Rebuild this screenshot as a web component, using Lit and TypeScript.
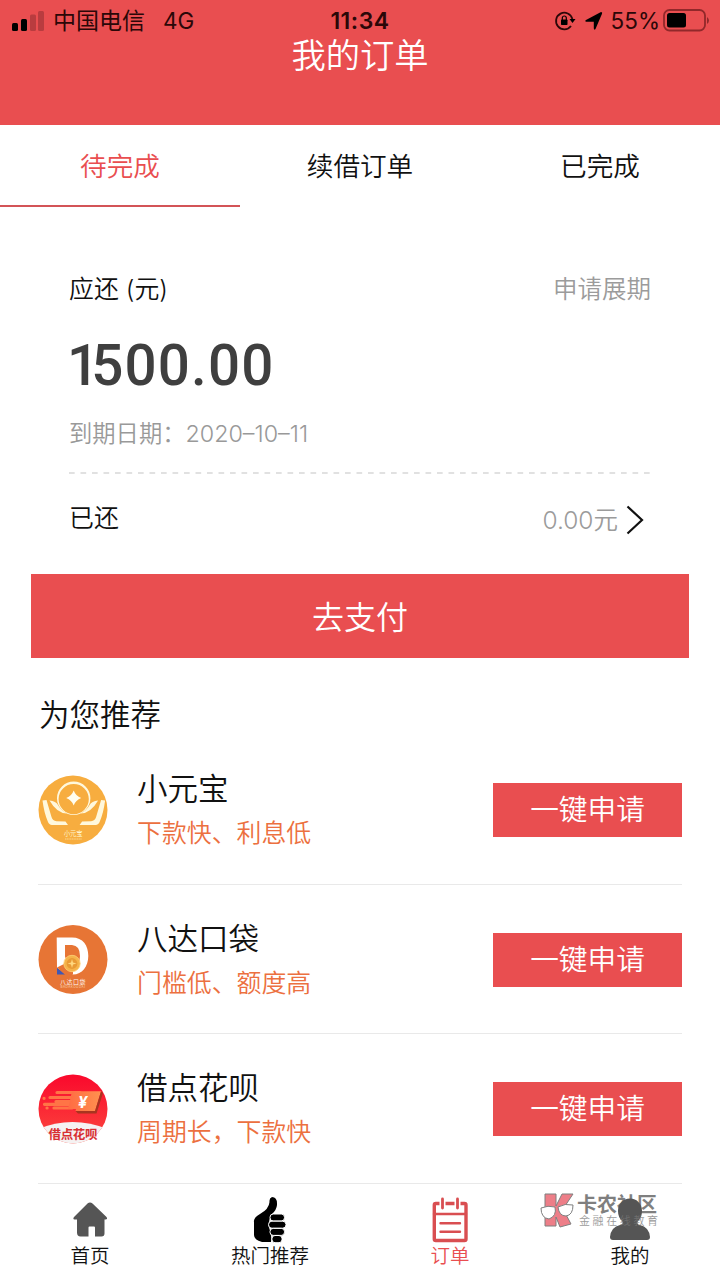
import { LitElement, html, css, svg } from "lit";
import { customElement } from "lit/decorators.js";

const coin = html`<svg class="logo" viewBox="0 5 90 90">
  <circle cx="43" cy="50" r="34.500" fill="#f7ad3f" />
  <path fill-rule="evenodd" fill="#fff8dc" d="M43.700 21.500a16.700 16.700 0 1 1 0 33.400a16.700 16.700 0 1 1 0-33.400zM43.700 24a15 15 0 1 0 0 30.200a15 15 0 1 0 0-30.200z" />
  <path d="M43.700 30.500q2 5.500 7.500 7.500q-5.500 2-7.500 7.500q-2-5.500-7.500-7.500q5.500-2 7.500-7.500z" fill="#fffdf0" />
  <g fill="#fff8dc">
    <path d="M12.500 40.500l4-.5 5 17q1.200 4 5 4.200l9 .4 2.500 3.400H22q-3-.2-4.200-3.500q-3.800-9-5.300-21zM19.500 40.500Q26 41 28 45Q30.500 50 37 53.500Q27 53.500 19.500 40.500z" />
    <path transform="translate(87.600 0) scale(-1 1)" d="M12.500 40.500l4-.5 5 17q1.200 4 5 4.200l9 .4 2.500 3.400H22q-3-.2-4.200-3.500q-3.800-9-5.300-21zM19.500 40.500Q26 41 28 45Q30.500 50 37 53.500Q27 53.500 19.500 40.500z" />
  </g>
  <text x="34" y="76" font-size="6.300" fill="#fff5cf" textLength="18.500">小元宝</text>
  <path d="M35 79h17" stroke="#fde0a0" stroke-width=".8" stroke-dasharray="1.300 .4" />
</svg>`;

const pocket = html`<svg class="logo" viewBox="0 -.500 90 90">
  <circle cx="43" cy="44" r="34.500" fill="#e77535" />
  <path fill-rule="evenodd" fill="#fff" d="M26.700 22H42C53 22 58.300 30 58.300 40.500S52 59 43 59L27 53zM35 29.500V41l4 12H42Q50 51 50 40.500T42 29.500z" />
  <path d="M27 52l8 7h-8z" fill="#3f58b5" />
  <path d="M27 52l8 7h8v-3l-8-8z" fill="#e77535" />
  <circle cx="42" cy="48" r="8.200" fill="#f5b34b" stroke="#ffd077" stroke-width=".8" />
  <circle cx="42" cy="48" r="5.400" fill="#e99a35" />
  <path d="M42 43.500l1 3.500 3.500 1-3.500 1-1 3.500-1-3.500-3.500-1 3.500-1z" fill="#ffd77f" />
  <text x="30" y="68" font-size="6" fill="#fff" textLength="25.500">八达口袋</text>
  <text x="30.500" y="72.500" font-size="3.200" fill="#ffe1cc" textLength="24.500">BADAKOUDAI</text>
</svg>`;

const flower = html`<svg class="logo" viewBox="0 -1 90 90">
  <defs>
    <clipPath id="c"><circle cx="43" cy="44" r="34.500" /></clipPath>
    <linearGradient id="g" x2="0" y2="1"><stop stop-color="#fa082c" /><stop offset="1" stop-color="#fb493e" /></linearGradient>
    <linearGradient id="o"><stop stop-color="#ff6c43" /><stop offset="1" stop-color="#ff914f" /></linearGradient>
  </defs>
  <g clip-path="url(#c)">
    <rect x="8" y="9" width="70" height="70" fill="url(#g)" />
    <path d="M6 65Q42 49 80 65V80H6z" fill="#f5f2f2" />
    <g stroke="#ff7446" stroke-width="3.200" stroke-linecap="round" fill="none"><path d="M27 27.500H50M14 33.300h.1M20 32.500H48M26 36.500H48M14.500 39.300H48M17 43h.1M24 43H42" /></g>
    <path d="M42 26.200H71L65 46H45.500L46 44H38z" fill="url(#o)" />
    <path d="M65 46l6-19.500 2 1.500-6.500 20.500H48L45.500 46z" fill="#a8351f" />
    <text x="48" y="42.500" font-size="16" font-weight="700" font-style="italic" fill="#fff">¥</text>
  </g>
  <text x="18.500" y="73.500" font-size="12.500" font-weight="700" fill="#d82f32" textLength="49">借点花呗</text>
</svg>`;

const icons = {
  home: svg`<path d="M31 23Q33.500 21 36 23L50 36.500Q51.500 38.500 49 39H48V53Q48 56 45 56H38.500V47Q38.500 46 37.500 46H33Q32 46 32 47V56H24Q20.500 56 20.500 52V39H18Q16 38.500 17.500 36.500z" transform="translate(.5 .5)" fill="#555" />`,
  thumb: svg`<g transform="translate(1 0)"><path d="M33 17Q38.500 17 38 25Q37.500 30 33 34Q28 42 30.500 49Q33 55 32 62H23Q15 60 15 55V42Q14 38 21 34Q30 29 30.500 22Q30 18 33 17z" fill="#000" />
    <g fill="#000" stroke="#fff" stroke-width="1"><rect x="31" y="34" width="14.500" height="7" rx="3.200" /><rect x="29.500" y="41.200" width="17.500" height="7" rx="3.400" /><rect x="31" y="48.400" width="14.500" height="7" rx="3.200" /><rect x="33" y="55.500" width="10" height="7.200" rx="3" /></g></g>`,
  order: svg`<g fill="none" stroke="#d94e51" stroke-width="2.800" stroke-linecap="round"><rect x="20.300" y="23.500" width="31.700" height="37" rx="1.500" stroke-width="3.400" /><path d="M20 34H52M26.500 43.200H46M26.500 51.800H46" stroke-width="2.400" /><path d="M28.500 18.500V29M43.500 18.500V29" stroke="#fff" stroke-width="6" stroke-linecap="butt" /><path d="M28.500 19V28M43.500 19V28" /></g>`,
  me: svg`<path d="M36 18.500C43 18.500 48 24 48 31Q48 37 44 41Q42 44 46 45Q55 47 56 57Q56 60 53 60H19Q16 60 16 57Q17 47 26 45Q30 44 28 41Q24 37 24 31C24 24 29 18.500 36 18.500z" fill="#555" />`,
};

const offers = [
  { logo: coin, name: "小元宝", note: "下款快、利息低" },
  { logo: pocket, name: "八达口袋", note: "门槛低、额度高" },
  { logo: flower, name: "借点花呗", note: "周期长，下款快" },
];

@customElement("app-root")
export class AppRoot extends LitElement {
  static styles = css`
    :host { display: block; width: 720px; height: 1280px; overflow: hidden; position: relative; background: #fff; color: #111; font-family: Inter, "Noto Sans CJK SC", sans-serif; font-weight: 350; }
    * { box-sizing: border-box; }
    svg { display: block; flex: none; }
    .header { height: 125px; background: #e94e50; }
    .status { height: 38px; display: grid; grid-template-columns: 1fr auto 1fr; align-items: center; padding: 2px 12px 0 12px; color: #2b0708; font-size: 22px; line-height: 36px; font-weight: 400; }
    .side { display: flex; align-items: center; }
    .right { justify-content: flex-end; margin-right: -2px; }
    .carrier { margin-left: 8px; padding-top: 1px; font-size: 23px; }
    .net { margin-left: 18px; font-size: 22.500px; }
    .clock { font-weight: 600; font-size: 23px; letter-spacing: .5px; }
    .pct { margin: 0 3px 0 8px; font-size: 22.500px; }
    .title { height: 34px; line-height: 36px; text-align: center; color: #fff; font-size: 34.300px; }
    .tabs { height: 82px; display: grid; grid-template-columns: repeat(3, 1fr); text-align: center; font-size: 26.600px; line-height: 82px; }
    .tab { height: 82px; border-bottom: 2px solid transparent; }
    .active { color: #e94e50; border-color: #d35457; }
    .bill { padding: 60px 69px 0; height: 367px; display: flex; flex-direction: column; }
    .row { display: flex; justify-content: space-between; align-items: center; height: 44px; line-height: 44px; font-size: 24.900px; }
    .muted { color: #9b9b9b; font-size: 24.500px; }
    .amount { height: 72px; margin-top: 17px; line-height: 76px; font-family: Roboto, sans-serif; font-size: 56.500px; font-weight: 500; color: #3f3f3f; letter-spacing: 1.200px; margin-left: -2px; }
    .lead { letter-spacing: -8px; }
    .due { margin-top: 13px; height: 40px; line-height: 42px; font-size: 23.300px; color: #999; }
    .dash { margin-top: 19px; flex: none; }
    .paid { margin-top: 24px; }
    .paid .label { position: relative; top: -2px; }
    .link { display: flex; align-items: center; gap: 8px; margin-right: 7px; }
    .pay { margin: 0 31px; height: 84px; line-height: 88px; text-align: center; background: #e94e50; color: #fff; font-size: 32px; }
    .heading { height: 77px; padding: 37px 0 0 39px; line-height: 40px; font-size: 30.500px; }
    .offer { height: 149.600px; margin: 0 38px; padding-top: 1.500px; display: flex; align-items: center; border-bottom: 1px solid #e9e9e9; }
    .logo { width: 90px; height: 90px; margin: 0 17px 0 -8px; }
    .info { flex: 1; padding-top: 2px; }
    .name { font-size: 30.500px; line-height: 44px; }
    .note { font-size: 24.900px; line-height: 44px; color: #ec7040; }
    .apply { width: 189px; height: 54px; line-height: 54px; background: #e94e50; color: #fff; text-align: center; font-size: 28.700px; }
    .nav { height: 96px; display: grid; grid-template-columns: repeat(4, 1fr); }
    .item { display: flex; flex-direction: column; align-items: center; font-size: 19.500px; line-height: 24px; }
    .item svg { margin: -4px 0 -4px; }
    .on { color: #e94e50; }
    .mark { position: absolute; left: 538px; top: 1188px; opacity: .75; }
  `;

  render() {
    return html`
      <header class="header">
        <div class="status">
          <div class="side">
            <svg width="33" height="22"><rect x="0" y="13" width="6" height="8" rx="1.500" /><rect x="9" y="9" width="6" height="12" rx="1.500" /><g fill="#b93c3f"><rect x="18" y="4.500" width="6" height="16.500" rx="1.500" /><rect x="26" y="1" width="6" height="20" rx="1.500" /></g></svg>
            <span class="carrier">中国电信</span><span class="net">4G</span>
          </div>
          <div class="clock">11:34</div>
          <div class="side right">
            <svg width="22" height="22" viewBox="0 0 22 22"><path d="M18.400 9A8.300 8.300 0 1 0 17 16" fill="none" stroke="#2b0708" stroke-width="1.800" /><path d="M15.500 9h6l-3 4z" /><rect x="7" y="9.500" width="6.500" height="5.500" rx=".7" /><path d="M8.300 10V8a2 2 0 0 1 4 0v2" fill="none" stroke="#000" stroke-width="1.200" /></svg>
            <svg width="27" height="20" viewBox="-8 0 27 20"><path d="M17 1Q18.800 1 18 2.700L11.500 18Q10.300 19.500 9.800 17.500V10.800H2Q.2 10 2 9z" /></svg>
            <span class="pct">55%</span>
            <svg width="47" height="23" viewBox="0 0 47 23"><rect x="1" y="1" width="41" height="20.500" rx="5.500" fill="none" stroke="#91282a" stroke-width="1.800" /><rect x="4" y="4" width="19" height="14.500" rx="2.500" /><path d="M44 8v7q2-1.500 2-3.500T44 8z" fill="#91282a" /></svg>
          </div>
        </div>
        <div class="title">我的订单</div>
      </header>
      <nav class="tabs"><div class="tab active">待完成</div><div class="tab">续借订单</div><div class="tab">已完成</div></nav>
      <section class="bill">
        <div class="row"><span>应还 (元)</span><span class="muted">申请展期</span></div>
        <div class="amount"><span class="lead">1</span>500.00</div>
        <div class="due">到期日期：2020–10–11</div>
        <svg class="dash" width="582" height="2"><path d="M0 1H582" stroke="#d8d8d8" stroke-width="1.500" stroke-dasharray="5.700 5.800" /></svg>
        <div class="row paid"><span class="label">已还</span><span class="muted link">0.00元<svg width="18" height="30" viewBox="0 0 18 30"><path d="M1.500 1.500L16 15 1.500 28.500" fill="none" stroke="#111" stroke-width="2.200" /></svg></span></div>
      </section>
      <div class="pay">去支付</div>
      <div class="heading">为您推荐</div>
      ${offers.map((o) => html`<div class="offer">${o.logo}<div class="info"><div class="name">${o.name}</div><div class="note">${o.note}</div></div><div class="apply">一键申请</div></div>`)}
      <nav class="nav">
        <div class="item"><svg width="68" height="68">${icons.home}</svg>首页</div>
        <div class="item"><svg width="64" height="68">${icons.thumb}</svg>热门推荐</div>
        <div class="item on"><svg width="72" height="68">${icons.order}</svg>订单</div>
        <div class="item"><svg width="72" height="68">${icons.me}</svg>我的</div>
      </nav>
      <svg class="mark" width="124" height="44" viewBox="0 0 124 44">
        <path d="M7 6H18V18L24 6H35L25 21 33 36 22 39 18 29V38H7z" fill="#e85461" stroke="#555" stroke-width="1" />
        <g fill="#fff" stroke="#555" stroke-width="1"><path d="M3 20Q10 17 17 19Q19 28 11 31Q3 30 3 20z" /><path d="M20 19Q27 15 35 17Q35 27 28 28Q21 28 20 19z" /></g>
        <text x="39" y="24" font-size="20" font-weight="700" fill="#555" textLength="80">卡农社区</text>
        <text x="41" y="37" font-size="11" fill="#777" textLength="79">金融在线教育</text>
      </svg>
    `;
  }
}
